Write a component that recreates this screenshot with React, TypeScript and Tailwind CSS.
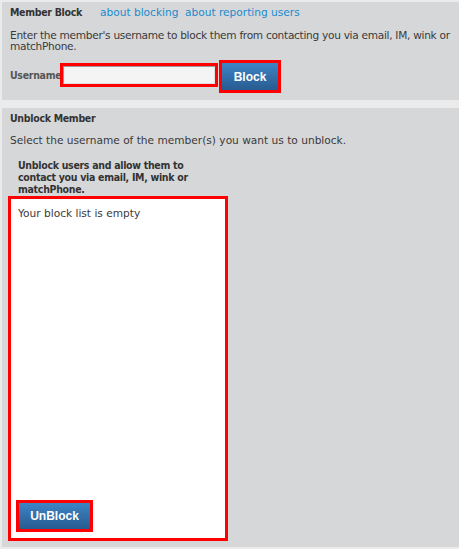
const bold = { fontFamily: '"DejaVu Sans Condensed", "DejaVu Sans", sans-serif', letterSpacing: '-0.3px' };
const btnFont = { fontFamily: '"Liberation Sans", Arial, sans-serif' };

export default function App() {
  return (
    <div
      className="w-[459px] h-[549px] bg-[#ebebeb] pt-[2px] pl-[2px] text-[10.6px] text-[#3a3a3a]"
      style={{ fontFamily: '"DejaVu Sans", Verdana, sans-serif' }}
    >
      <div className="bg-[#d6d7d9] h-[98px] pl-[8px] pt-[3px]">
        <div className="flex items-baseline leading-[14px]">
          <span className="font-bold text-[#333] w-[90px] text-[10.5px]" style={bold}>Member Block</span>
          <a className="text-[#1b8bcd] w-[85px]">about blocking</a>
          <a className="text-[#1b8bcd]">about reporting users</a>
        </div>
        <p className="mt-[11px] leading-[11px] tracking-[-0.3px]">
          Enter the member's username to block them from contacting you via email, IM, wink or matchPhone.
        </p>
        <div className="flex items-start mt-[8px]">
          <span className="mt-[8px] font-bold text-[#555] w-[50px] text-[10.5px] leading-[14px]" style={bold}>Username</span>
          <div className="mt-[3px] border-[3px] border-[#ff0000] w-[158px] h-[24px]">
            <div className="h-full bg-[#f4f4f4] border border-[#9a9a9a] border-r-[#e0e0e0] border-b-[#e0e0e0]" />
          </div>
          <div className="ml-[1px] border-[3px] border-[#ff0000] w-[62px] h-[33px]">
            <button className="w-full h-full bg-gradient-to-b from-[#3d85c6] to-[#285b91] text-white font-bold text-[12px]" style={btnFont}>
              Block
            </button>
          </div>
        </div>
      </div>
      <div className="h-[8px]" />
      <div className="bg-[#d6d7d9] h-[439px] pl-[8px] pt-[3px]">
        <div className="font-bold text-[#333] leading-[14px] text-[10.5px]" style={bold}>Unblock Member</div>
        <p className="mt-[8px] leading-[14px]">Select the username of the member(s) you want us to unblock.</p>
        <p className="mt-[12px] ml-[8px] w-[200px] font-bold text-[#333] leading-[12px] text-[10.5px]" style={bold}>
          Unblock users and allow them to contact you via email, IM, wink or matchPhone.
        </p>
        <div className="mt-[1px] -ml-[2px] w-[220px] h-[345px] border-[3px] border-[#ff0000] bg-white flex flex-col justify-between pl-[7px] pt-[7px] pb-[6px]">
          <div className="leading-[14px]">Your block list is empty</div>
          <div className="-ml-[2px] border-[3px] border-[#ff0000] w-[77px] h-[32px]">
            <button className="w-full h-full bg-gradient-to-b from-[#3d85c6] to-[#285b91] text-white font-bold text-[12px]" style={btnFont}>
              UnBlock
            </button>
          </div>
        </div>
      </div>
    </div>
  );
}
